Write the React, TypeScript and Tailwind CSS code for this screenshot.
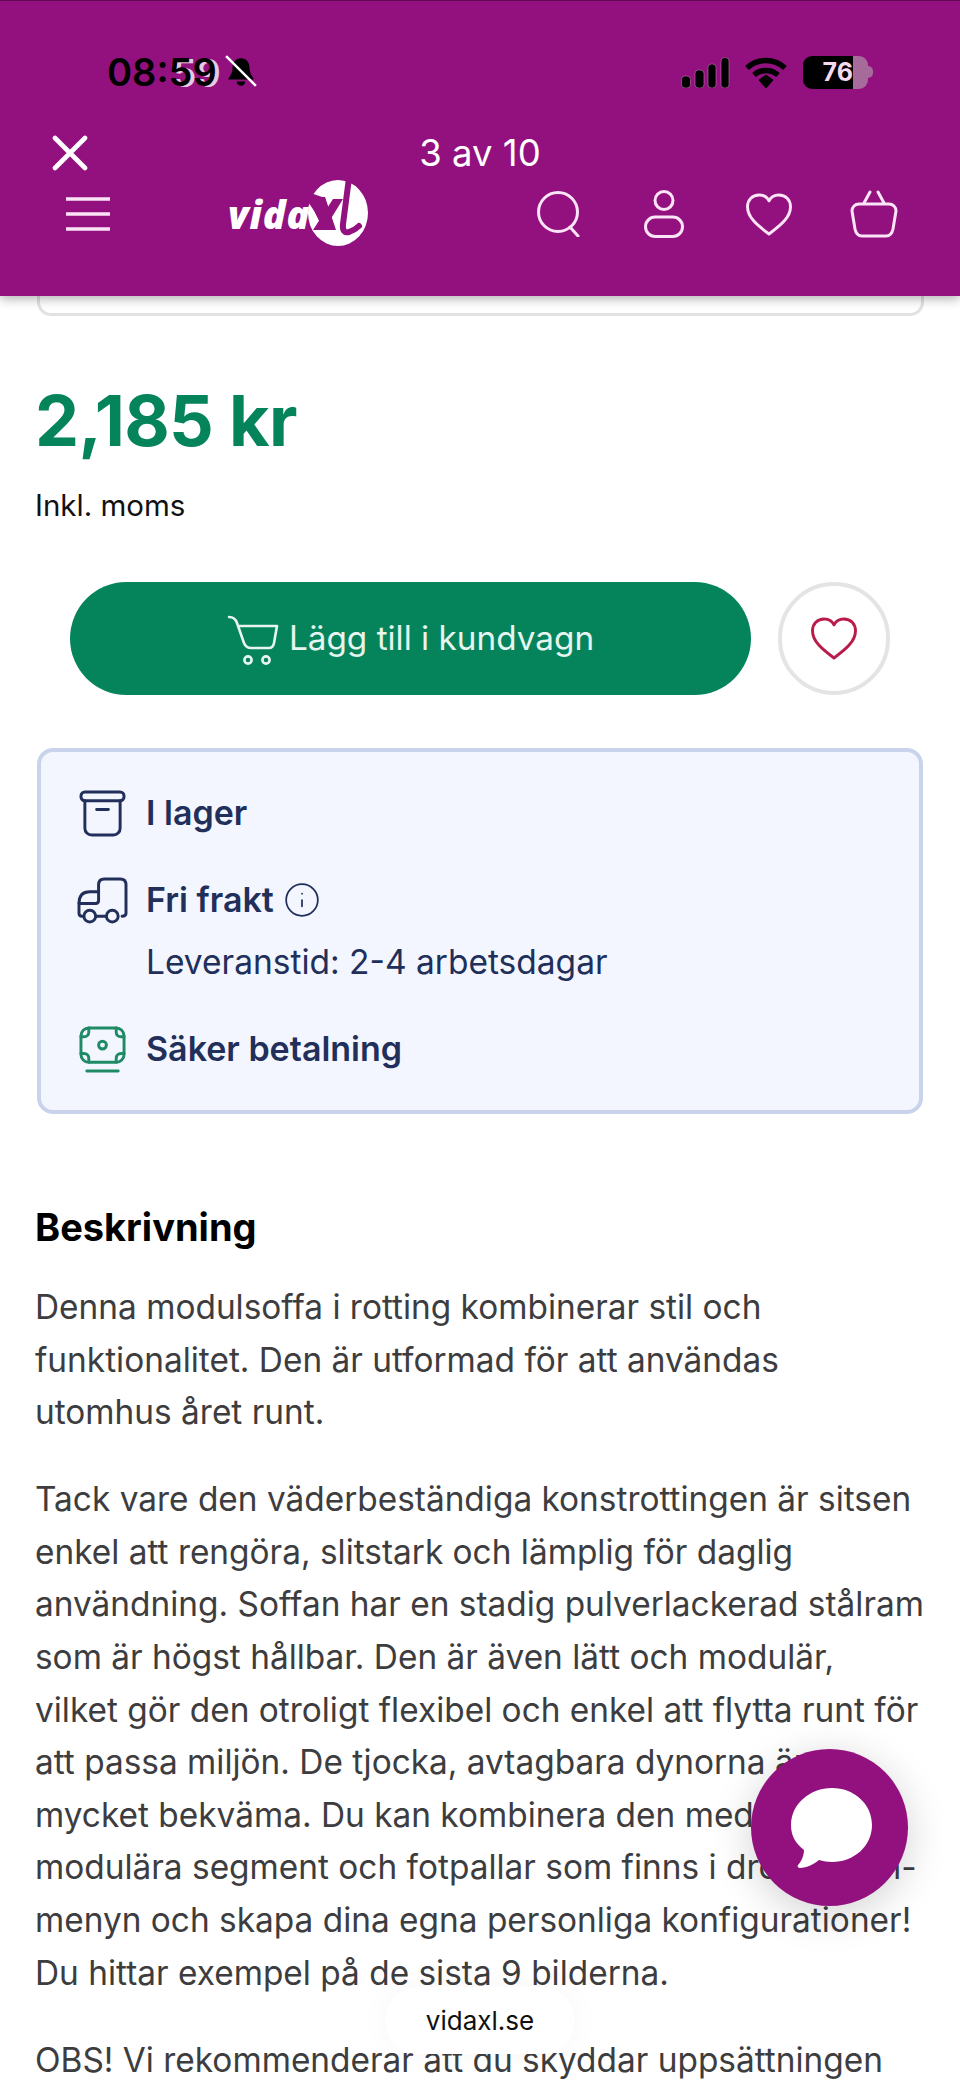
import { Info } from 'lucide-react';

const paragraphs = [
  ['Denna modulsoffa i rotting kombinerar stil och', 'funktionalitet. Den är utformad för att användas', 'utomhus året runt.'],
  [
    'Tack vare den väderbeständiga konstrottingen är sitsen',
    'enkel att rengöra, slitstark och lämplig för daglig',
    'användning. Soffan har en stadig pulverlackerad stålram',
    'som är högst hållbar. Den är även lätt och modulär,',
    'vilket gör den otroligt flexibel och enkel att flytta runt för',
    'att passa miljön. De tjocka, avtagbara dynorna är',
    'mycket bekväma. Du kan kombinera den med andra',
    'modulära segment och fotpallar som finns i drop-down-',
    'menyn och skapa dina egna personliga konfigurationer!',
    'Du hittar exempel på de sista 9 bilderna.',
  ],
  ['OBS! Vi rekommenderar att du skyddar uppsättningen'],
];

function Logo() {
  return (
    <div className="flex items-center text-white">
      <span className="font-['Open_Sans',sans-serif] text-[38px] font-extrabold italic leading-none tracking-[0.8px]">vida</span>
      <svg viewBox="0 0 80 80" className="-ml-[11px] h-[80px] w-[80px]">
        <ellipse cx="39" cy="39" rx="30" ry="33" fill="#fff" />
        <path d="M0 15 L26 24 L36 55 L24 55 L16 38 Z" fill="#93117e" />
        <path d="M8 23 H26 L37 56 H25 Z" fill="#93117e" />
        <path d="M34 25 H44 L25 56 H14 Z" fill="#93117e" />
        <path d="M50 4 L44 50 Q43 60 50 58 Q56 56 60 52" fill="none" stroke="#93117e" strokeWidth="6" strokeLinecap="round" />
      </svg>
    </div>
  );
}

function HeartIcon({ stroke }: { stroke: string }) {
  return (
    <svg viewBox="0 0 48 44" className="h-[43px] w-[48px]" fill="none" stroke={stroke} strokeWidth="3" strokeLinejoin="round">
      <path d="M24 42C12 33 2 25 2 14 2 7 7 2 14 2c4 0 8 2 10 6 2-4 6-6 10-6 7 0 12 5 12 12 0 11-10 19-22 28z" />
    </svg>
  );
}

export default function App() {
  return (
    <div className="relative h-[2086px] w-[960px] overflow-hidden bg-white font-['Inter',sans-serif]">
      <header className="relative z-10 flex h-[296px] flex-col border-t border-[#5e0b52] bg-[#93117e] pt-[54px] shadow-[0_3px_10px_rgba(0,0,0,0.3)]">
        {/* status bar */}
        <div className="flex h-[34px] items-center pl-[107px] pr-[87px]">
          <span className="text-[38px] font-semibold leading-none text-black">
            08:<span className="[text-shadow:4px_1px_0_rgba(255,255,255,0.8)]">59</span>
          </span>
          <svg viewBox="0 0 32 32" className="ml-[6px] h-[34px] w-[36px]" fill="#000">
            <path d="M16 3c-5 0-8 4-8 9 0 6-3 8-4 11h24c-1-3-4-5-4-11 0-5-3-9-8-9z" />
            <path d="M12 25h8a4 4 0 0 1-8 0z" />
            <path d="M2 1l28 28" stroke="#fff" strokeWidth="2.4" />
          </svg>
          <svg viewBox="0 0 49 31" className="ml-auto h-[31px] w-[49px]" fill="#000" stroke="#c774b6" strokeWidth="0.6">
            <rect x="0.5" y="19" width="9" height="12" rx="3.5" />
            <rect x="14" y="13" width="9" height="18" rx="3.5" />
            <rect x="27" y="7" width="8" height="24" rx="3.5" />
            <rect x="40" y="0.5" width="8" height="30.5" rx="3.5" />
          </svg>
          <svg viewBox="0 0 42 31" className="ml-[15px] h-[31px] w-[42px]" fill="none" stroke="#000">
            <path d="M2 11c11-10 27-10 38 0" strokeWidth="5.5" />
            <path d="M9 18c7-6 17-6 24 0" strokeWidth="5.5" />
            <path d="M14 23l7-5 7 5-7 8z" fill="#000" strokeWidth="1" />
          </svg>
          <div className="ml-[16px] flex items-center">
            <div className="flex h-[33px] w-[65px] overflow-hidden rounded-[9px]">
              <div className="flex h-full w-[50px] items-center justify-end bg-black text-[25px] font-bold leading-none text-[#f6d9ef]">76</div>
              <div className="h-full flex-1 bg-[#a66b9b]" />
            </div>
            <div className="h-[12px] w-[5px] rounded-r-full bg-[#a66b9b]" />
          </div>
        </div>

        {/* gallery title */}
        <div className="mt-[46px] flex h-[36px] items-center justify-between pl-[52px]">
          <svg viewBox="0 0 36 36" className="h-[36px] w-[36px]" fill="none" stroke="#fff" strokeWidth="4.6" strokeLinecap="round">
            <path d="M3 3l30 30M33 3L3 33" />
          </svg>
          <span className="absolute left-0 right-0 text-center text-[36.5px] leading-none text-white">3 av 10</span>
        </div>

        {/* nav */}
        <div className="mt-[10px] flex h-[66px] items-center pl-[66px] pr-[34px]">
          <svg viewBox="0 0 44 34" className="h-[34px] w-[44px]" fill="none" stroke="#fbe4f6" strokeWidth="3.4">
            <path d="M0 2h44M0 17h44M0 32h44" />
          </svg>
          <div className="ml-[118px]">
            <Logo />
          </div>
          <div className="ml-auto flex items-center text-[#fbe4f6]">
            <div className="flex w-[105px] justify-center">
              <svg viewBox="0 0 46 46" className="h-[46px] w-[46px]" fill="none" stroke="currentColor" strokeWidth="3" strokeLinecap="round">
                <circle cx="22" cy="21" r="19.5" />
                <path d="M34 36l8 9" />
              </svg>
            </div>
            <div className="flex w-[105px] justify-center">
              <svg viewBox="0 0 40 48" className="h-[48px] w-[40px]" fill="none" stroke="currentColor" strokeWidth="3">
                <circle cx="20" cy="10.5" r="9" />
                <rect x="1.5" y="27" width="37" height="19.5" rx="9.7" />
              </svg>
            </div>
            <div className="flex w-[105px] justify-center">
              <HeartIcon stroke="currentColor" />
            </div>
            <div className="flex w-[105px] justify-center">
              <svg viewBox="0 0 48 48" className="h-[48px] w-[48px]" fill="none" stroke="currentColor" strokeWidth="3" strokeLinecap="round" strokeLinejoin="round">
                <path d="M9 14h30c4 0 7 3 7 7l-3 18c-1 5-3 7-7 7H12c-4 0-6-2-7-7L2 21c0-4 3-7 7-7z" />
                <path d="M14 13l6-11M34 13l-6-11" />
              </svg>
            </div>
          </div>
        </div>
      </header>

      <main className="pl-[35px] pr-[36px]">
        <div className="-mt-[8px] ml-[2px] h-[28px] rounded-b-[14px] border-[3px] border-t-0 border-[#e2e2e5]" />

        <p className="mt-[65px] text-[70px] font-bold leading-[80px] tracking-[-0.7px] text-[#05845b]">2,185 kr</p>
        <p className="mt-[24px] text-[29.5px] leading-[40px] text-[#111]">Inkl. moms</p>

        <div className="mt-[57px] flex items-center pl-[35px]">
          <button className="flex h-[113px] w-[681px] items-center justify-center gap-[10px] rounded-full bg-[#05845b] text-[33.3px] text-[#e6f5ef]">
            <svg viewBox="6 10 52 52" className="h-[52px] w-[52px]" fill="none" stroke="currentColor" strokeWidth="2.6" strokeLinecap="round" strokeLinejoin="round">
              <path d="M8 14q6 0 8 6l7 20q2 5 7 5h18q4 0 5-5l3-17H17" />
              <circle cx="27" cy="57" r="3.6" />
              <circle cx="45" cy="57" r="3.6" />
            </svg>
            Lägg till i kundvagn
          </button>
          <div className="ml-[27px] flex h-[113px] w-[112px] shrink-0 items-center justify-center rounded-full border-[4px] border-[#e4e4e6]">
            <HeartIcon stroke="#b91c4b" />
          </div>
        </div>

        <section className="ml-[2px] mr-[1px] mt-[53px] flex h-[366px] flex-col rounded-[16px] border-[4px] border-[#c9d3ec] bg-[#f3f6fe] pl-[38px] pt-[37px] text-[#212f5a]">
          <div className="flex items-center gap-[20px]">
            <svg viewBox="0 0 48 48" className="h-[47px] w-[47px]" fill="none" stroke="currentColor" strokeWidth="3" strokeLinecap="round" strokeLinejoin="round">
              <rect x="2" y="2" width="44" height="9" rx="4" />
              <path d="M6 11v28c0 4 3 7 7 7h22c4 0 7-3 7-7V11M18 20h12" />
            </svg>
            <span className="text-[34px] font-semibold leading-[48px]">I lager</span>
          </div>
          <div className="mt-[39px] flex items-center gap-[18px]">
            <svg viewBox="0 0 52 48" className="-ml-[2px] h-[47px] w-[51px]" fill="none" stroke="currentColor" strokeWidth="3" strokeLinecap="round" strokeLinejoin="round">
              <path d="M7 40H5c-2 0-3-1-3-3V27c0-8 4-12 11-12h9V8c0-4 2-6 6-6h16c4 0 6 2 6 6v29c0 2-2 3-4 3M19 40h11" />
              <path d="M22 15v9c0 2-1 3-3 3H2" />
              <circle cx="13" cy="40" r="6" />
              <circle cx="36" cy="40" r="6" />
            </svg>
            <span className="text-[34px] font-semibold leading-[48px]">Fri frakt</span>
            <Info className="-ml-[9px] h-[38px] w-[38px]" strokeWidth={1.1} />
          </div>
          <p className="ml-[67px] mt-[16px] text-[33.5px] leading-[44px]">Leveranstid: 2-4 arbetsdagar</p>
          <div className="mt-[41px] flex items-center gap-[20px]">
            <svg viewBox="0 0 48 48" className="h-[47px] w-[47px]" fill="none" stroke="#1f8a66" strokeWidth="3" strokeLinecap="round">
              <rect x="2" y="2" width="44" height="35" rx="8" />
              <circle cx="24" cy="19.5" r="4" />
              <path d="M2 11h3c3 0 5-2 5-5V2M46 11h-3c-3 0-5-2-5-5V2M2 28h3c3 0 5 2 5 5v4M46 28h-3c-3 0-5 2-5 5v4M8 46h32" />
            </svg>
            <span className="text-[34px] font-semibold leading-[48px]">Säker betalning</span>
          </div>
        </section>

        <h2 className="mt-[89px] text-[38px] font-bold leading-[48px] text-black">Beskrivning</h2>
        <div className="mt-[30px] flex flex-col gap-[34.5px] text-[33.4px] leading-[52.6px] text-[#3d3d3f]">
          {paragraphs.map((lines) => (
            <p key={lines[0]} className="whitespace-nowrap">
              {lines.map((line) => (
                <span key={line} className="block">
                  {line}
                </span>
              ))}
            </p>
          ))}
        </div>
      </main>

      <div className="absolute left-[751px] top-[1749px] flex h-[157px] w-[157px] items-center justify-center rounded-full bg-[#93117e] shadow-[0_8px_40px_rgba(0,0,0,0.18)]">
        <svg viewBox="0 0 84 84" className="h-[84px] w-[84px]" fill="#fff">
          <path d="M44 2c22 0 40 16 40 37S66 76 44 76c-4 0-9-1-13-2-5 4-12 8-19 8-2 0-3-2-2-3 3-3 6-9 6-15C7 57 3 49 3 39 3 18 22 2 44 2z" />
        </svg>
      </div>

      <div className="absolute left-[385px] top-[1987px] flex h-[67px] w-[190px] items-center justify-center rounded-full bg-white text-[26px] text-[#111] shadow-[0_0_30px_rgba(0,0,0,0.04)]">
        vidaxl.se
      </div>
    </div>
  );
}
